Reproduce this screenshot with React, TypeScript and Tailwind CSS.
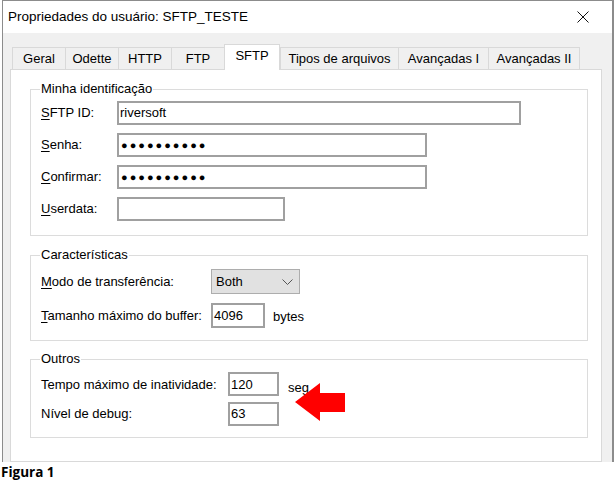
import React from 'react';

const tabs = [
  { label: 'Geral', w: 'w-[53px]' },
  { label: 'Odette', w: 'w-[53px]' },
  { label: 'HTTP', w: 'w-[53px]' },
  { label: 'FTP', w: 'w-[53px]' },
  { label: 'SFTP', w: 'w-[56px]', active: true },
  { label: 'Tipos de arquivos', w: 'w-[118px]' },
  { label: 'Avançadas I', w: 'w-[90px]' },
  { label: 'Avançadas II', w: 'w-[92px]' },
];

// Windows-style text box
function Box({ w, h = 'h-[24px]', children }: { w: string; h?: string; children?: React.ReactNode }) {
  return (
    <div className={`${w} ${h} border-2 border-[#a0a0a0] bg-white flex items-center px-[1px] text-[13px]`}>
      {children}
    </div>
  );
}

function Label({ w, first, rest }: { w: string; first: string; rest: string }) {
  return (
    <span className={`${w} shrink-0`}>
      <u className="underline-offset-2">{first}</u>
      {rest}
    </span>
  );
}

function Dots() {
  return <span className="text-[11px] tracking-[2px] leading-none pl-[1px]">●●●●●●●●●●</span>;
}

export default function App() {
  return (
    <div className="w-[616px] h-[483px] bg-white overflow-hidden font-['Liberation_Sans',Arial,sans-serif] text-black">
      <div className="ml-[2px] w-[612px] h-[462px] border-l border-t border-r-2 border-[#8c8c8c] flex flex-col overflow-hidden">
        {/* title bar */}
        <div className="h-[32px] shrink-0 bg-white flex items-center justify-between pl-[5px] pr-[23px]">
          <span className="text-[13.5px]">Propriedades do usuário: SFTP_TESTE</span>
          <svg width="12" height="12" viewBox="0 0 12 12">
            <path d="M0.5 0.5 L11.5 11.5 M11.5 0.5 L0.5 11.5" stroke="#111" strokeWidth="1" />
          </svg>
        </div>

        {/* dialog body */}
        <div className="flex-1 bg-[#f0f0f0] pt-[11px] pl-[7px] pr-[10px] flex flex-col text-[13px]">
          {/* tabs */}
          <div className="h-[25px] shrink-0 flex items-end pl-[2px]">
            {tabs.map((t, i) =>
              t.active ? (
                <div
                  key={t.label}
                  className={`${t.w} h-[26px] -mb-px relative z-10 bg-white border-x border-t border-[#d9d9d9] flex items-center justify-center pb-[4px]`}
                >
                  {t.label}
                </div>
              ) : (
                <div
                  key={t.label}
                  className={`${t.w} h-[22px] bg-[#f0f0f0] border-l border-t border-[#d9d9d9] ${i === tabs.length - 1 ? 'border-r' : ''} flex items-center justify-center`}
                >
                  {t.label}
                </div>
              )
            )}
          </div>

          {/* tab panel */}
          <div className="flex-1 bg-white border border-[#d9d9d9] pl-[19px] pr-[13px] flex flex-col">
            {/* Minha identificação */}
            <fieldset className="mt-[11px] border border-[#dcdcdc] pl-[10px] pt-[4px] pb-[14px]">
              <legend className="leading-[16px] px-[1px] -ml-[1px]">Minha identificação</legend>
              <div className="flex flex-col gap-[8px]">
                <div className="flex items-center">
                  <Label w="w-[76px]" first="S" rest="FTP ID:" />
                  <Box w="w-[404px]">riversoft</Box>
                </div>
                <div className="flex items-center">
                  <Label w="w-[76px]" first="S" rest="enha:" />
                  <Box w="w-[310px]">
                    <Dots />
                  </Box>
                </div>
                <div className="flex items-center">
                  <Label w="w-[76px]" first="C" rest="onfirmar:" />
                  <Box w="w-[310px]">
                    <Dots />
                  </Box>
                </div>
                <div className="flex items-center">
                  <Label w="w-[76px]" first="U" rest="serdata:" />
                  <Box w="w-[168px]" />
                </div>
              </div>
            </fieldset>

            {/* Características */}
            <fieldset className="mt-[11px] border border-[#dcdcdc] pl-[10px] pt-[6px] pb-[12px]">
              <legend className="leading-[16px] px-[1px] -ml-[1px]">Características</legend>
              <div className="flex flex-col gap-[9px]">
                <div className="flex items-center">
                  <Label w="w-[170px]" first="M" rest="odo de transferência:" />
                  <div className="w-[89px] h-[25px] bg-[#e1e1e1] border border-[#adadad] flex items-center justify-between pl-[4px] pr-[6px]">
                    <span>Both</span>
                    <svg width="11" height="6" viewBox="0 0 11 6">
                      <path d="M0.5 0.5 L5.5 5.5 L10.5 0.5" fill="none" stroke="#555" strokeWidth="1" />
                    </svg>
                  </div>
                </div>
                <div className="flex items-center">
                  <Label w="w-[170px]" first="T" rest="amanho máximo do buffer:" />
                  <Box w="w-[54px]" h="h-[25px]">4096</Box>
                  <span className="ml-[8px] pt-[3px]">bytes</span>
                </div>
              </div>
            </fieldset>

            {/* Outros */}
            <fieldset className="relative mt-[10px] border border-[#dcdcdc] pl-[10px] pt-[4px] pb-[11px]">
              <legend className="leading-[16px] px-[1px] -ml-[1px]">Outros</legend>
              <div className="flex flex-col gap-[4px]">
                <div className="flex items-center">
                  <span className="w-[187px] shrink-0">Tempo máximo de inatividade:</span>
                  <Box w="w-[51px]">120</Box>
                  <span className="ml-[9px] pt-[7px]">seg</span>
                </div>
                <div className="flex items-center">
                  <span className="w-[187px] shrink-0">Nível de debug:</span>
                  <Box w="w-[51px]">63</Box>
                </div>
              </div>
              {/* annotation arrow */}
              <svg className="absolute left-[264px] top-[16px]" width="50" height="38" viewBox="0 0 50 38">
                <polygon points="0,19 25,0 25,10 50,10 50,29 25,29 25,38" fill="#ff0000" />
              </svg>
            </fieldset>
          </div>
        </div>
      </div>
      <div className="font-['Open_Sans',sans-serif] font-bold text-[13.5px] leading-[20px] pl-[1px]">Figura 1</div>
    </div>
  );
}
